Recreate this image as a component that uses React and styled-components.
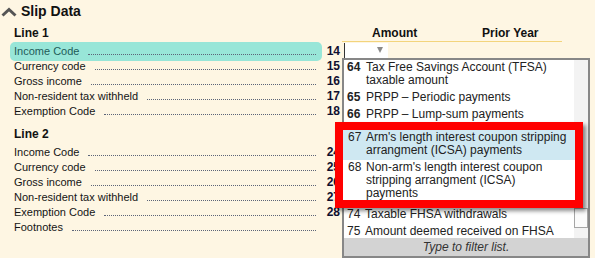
import React from "react";
import styled, { createGlobalStyle } from "styled-components";

const line1 = [
    { label: "Income Code", num: "14", active: true },
    { label: "Currency code", num: "15" },
    { label: "Gross income", num: "16" },
    { label: "Non-resident tax withheld", num: "17" },
    { label: "Exemption Code", num: "18" },
];

const line2 = [
    { label: "Income Code", num: "24" },
    { label: "Currency code", num: "25" },
    { label: "Gross income", num: "26" },
    { label: "Non-resident tax withheld", num: "27" },
    { label: "Exemption Code", num: "28" },
    { label: "Footnotes", num: "" },
];

const topOptions = [
    { code: "64", text: "Tax Free Savings Account (TFSA) taxable amount" },
    { code: "65", text: "PRPP – Periodic payments" },
    { code: "66", text: "PRPP – Lump-sum payments" },
];

const bottomOptions = [
    { code: "74", text: "Taxable FHSA withdrawals" },
    { code: "75", text: "Amount deemed received on FHSA" },
];

const App = () => {
    return (
        <>
            <GlobalStyle />
            <Page>
                <TitleBar>
                    <Chevron width="16" height="10" viewBox="0 0 16 10">
                        <path d="M1.5 8.5 L8 2.5 L14.5 8.5" />
                    </Chevron>
                    <Title>Slip Data</Title>
                </TitleBar>

                <Section>
                    <HeadRow>
                        <LineTitle>Line 1</LineTitle>
                        <div />
                        <ColHead ruled pad={30}>Amount</ColHead>
                        <ColHead ruled pad={33}>Prior Year</ColHead>
                    </HeadRow>
                    {line1.map((r, i) => (
                        <Row key={r.label}>
                            <LabelCell active={r.active}>
                                <span>{r.label}</span>
                                <Leader />
                            </LabelCell>
                            <NumCell>{r.num}</NumCell>
                            <AmountCell>
                                {i === 0 && (
                                    <>
                                        <CodeInput>
                                            <Arrow />
                                        </CodeInput>
                                        <Dropdown>
                                            <ListArea>
                                                <OptionList>
                                                    {topOptions.map((o) => (
                                                        <Option key={o.code}>
                                                            <OptCode strong>{o.code}</OptCode>
                                                            <OptText>{o.text}</OptText>
                                                        </Option>
                                                    ))}
                                                    <ListTail>
                                                        {bottomOptions.map((o) => (
                                                            <Option key={o.code}>
                                                                <OptCode>{o.code}</OptCode>
                                                                <OptText>{o.text}</OptText>
                                                            </Option>
                                                        ))}
                                                    </ListTail>
                                                </OptionList>
                                                <ScrollTrack>
                                                    <ScrollThumb />
                                                </ScrollTrack>
                                            </ListArea>
                                            <FilterHint>Type to filter list.</FilterHint>

                                            <Callout>
                                                <CalloutOption selected>
                                                    <OptCode>67</OptCode>
                                                    <OptText>Arm's length interest coupon stripping arrangment (ICSA) payments</OptText>
                                                </CalloutOption>
                                                <CalloutOption>
                                                    <OptCode>68</OptCode>
                                                    <OptText>Non-arm's length interest coupon stripping arrangment (ICSA) payments</OptText>
                                                </CalloutOption>
                                            </Callout>
                                        </Dropdown>
                                    </>
                                )}
                            </AmountCell>
                            <div />
                        </Row>
                    ))}
                </Section>

                <Section gap>
                    <HeadRow>
                        <LineTitle>Line 2</LineTitle>
                        <div />
                        <ColHead />
                        <ColHead />
                    </HeadRow>
                    {line2.map((r) => (
                        <Row key={r.label}>
                            <LabelCell>
                                <span>{r.label}</span>
                                <Leader />
                            </LabelCell>
                            <NumCell>{r.num}</NumCell>
                            <AmountCell />
                            <div />
                        </Row>
                    ))}
                </Section>
            </Page>
        </>
    );
};

const GlobalStyle = createGlobalStyle`
    body {
        margin: 0;
        background: #fef6e3;
        font-family: "Liberation Sans", Arial, sans-serif;
        color: #161616;
    }
`;

const Page = styled.div`
    width: 595px;
    height: 258px;
    overflow: hidden;
    padding-top: 2px;
    box-sizing: border-box;
`;

const TitleBar = styled.div`
    display: flex;
    align-items: center;
    height: 18px;
`;

const Chevron = styled.svg`
    margin: 2px 4px 0 1px;
    fill: none;
    stroke: #555555;
    stroke-width: 3;
    stroke-linecap: butt;
`;

const Title = styled.div`
    font-size: 14px;
    font-weight: 700;
    line-height: 18px;
    color: #111;
`;

const Section = styled.div`
    margin: ${(p) => (p.gap ? "8px" : "6px")} 0 0 12px;
`;

const cols = "308px 22px 107px 113px";

const HeadRow = styled.div`
    display: grid;
    grid-template-columns: ${cols};
    height: 18px;
`;

const LineTitle = styled.div`
    padding-left: 2px;
    font-size: 12px;
    font-weight: 700;
    line-height: 14px;
    color: #111;
`;

const ColHead = styled.div`
    height: 16px;
    box-sizing: border-box;
    padding-left: ${(p) => p.pad || 0}px;
    border-bottom: 1px solid ${(p) => (p.ruled ? "#f3d47c" : "transparent")};
    font-size: 12px;
    font-weight: 700;
    line-height: 14px;
    color: #111;
`;

const Row = styled.div`
    display: grid;
    grid-template-columns: ${cols};
    height: 15px;
    font-size: 11px;
    line-height: 15px;
`;

const LabelCell = styled.div`
    display: flex;
    padding: 0 4px 0 2px;
    border-radius: 3px;
    background: ${(p) => (p.active ? "#98e6d8" : "transparent")};
    box-shadow: ${(p) => (p.active ? "0 0 0 2px #98e6d8" : "none")};
    color: ${(p) => (p.active ? "#1f5c58" : "#141414")};
    white-space: nowrap;
`;

const Leader = styled.span`
    flex: 1;
    align-self: flex-end;
    margin: 0 0 4px 9px;
    border-bottom: 1px dotted #5c6478;
`;

const NumCell = styled.div`
    text-align: right;
    padding-right: 2px;
    font-size: 12px;
    font-weight: 700;
    color: #101030;
`;

const AmountCell = styled.div`
    position: relative;
`;

const CodeInput = styled.div`
    position: relative;
    width: 43px;
    height: 15px;
    margin: -1px 0 0 2px;
    background: #fff;
    border-left: 1px solid #333;
`;

const Arrow = styled.span`
    position: absolute;
    right: 5px;
    top: 4px;
    border-left: 3.5px solid transparent;
    border-right: 3.5px solid transparent;
    border-top: 6px solid #8a8a8a;
`;

const Dropdown = styled.div`
    position: absolute;
    top: 14px;
    left: 0;
    z-index: 5;
    width: 248px;
    height: 200px;
    box-sizing: border-box;
    border: 2px solid #878787;
    background: #fff;
    display: flex;
    flex-direction: column;
`;

const ListArea = styled.div`
    display: flex;
    height: 178px;
    overflow: hidden;
`;

const OptionList = styled.div`
    flex: 1;
    display: flex;
    flex-direction: column;
    font-size: 12px;
    line-height: 13px;
    color: #222;
`;

const ListTail = styled.div`
    margin-top: auto;
    margin-bottom: -3px;
`;

const Option = styled.div`
    display: flex;
    padding: 1px 6px 3px 3px;
`;

const OptCode = styled.span`
    flex: 0 0 ${(p) => (p.strong ? 19 : 18)}px;
    font-weight: ${(p) => (p.strong ? 700 : 400)};
`;

const OptText = styled.span`
    flex: 1;
`;

const ScrollTrack = styled.div`
    width: 14px;
    background: #f3f3f3;
    display: flex;
    flex-direction: column;
`;

const ScrollThumb = styled.div`
    margin-top: 148px;
    height: 18px;
    border: 1px solid #a6a6a6;
    background: #fbfbfb;
`;

const FilterHint = styled.div`
    height: 18px;
    background: #d3d3d3;
    font-size: 12px;
    font-style: italic;
    line-height: 18px;
    text-align: center;
    color: #333;
`;

const Callout = styled.div`
    position: absolute;
    left: -9px;
    top: 62px;
    width: 248px;
    height: 86px;
    box-sizing: border-box;
    border: 8px solid #ff0000;
    background: #fff;
    box-shadow: 3px 3px 4px rgba(0, 0, 0, 0.45);
    overflow: hidden;
    font-size: 12px;
    line-height: 13px;
    color: #222;
`;

const CalloutOption = styled.div`
    display: flex;
    padding: 1px 7px 3px 5px;
    background: ${(p) => (p.selected ? "#cfe8f2" : "#fff")};
`;

export default App;
